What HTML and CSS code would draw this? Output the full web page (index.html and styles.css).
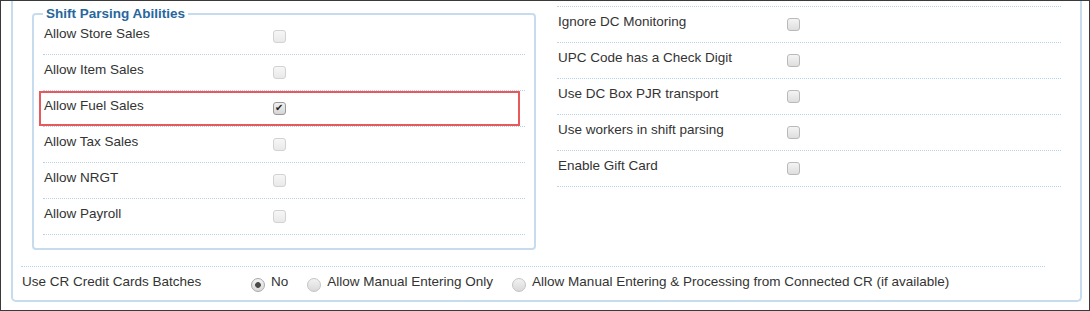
FILE: index.html
```html
<!DOCTYPE html>
<html lang="en">
<head>
    <meta charset="UTF-8">
    <meta name="viewport" content="width=device-width, initial-scale=1.0">
    <title>Store Settings</title>
    <link rel="stylesheet" href="styles.css">
</head>
<body>
    <div class="frame">
        <div class="panel">
            <div class="top">
                <fieldset class="group">
                    <legend>Shift Parsing Abilities</legend>
                    <div class="row">
                        <label for="store-sales">Allow Store Sales</label>
                        <input id="store-sales" type="checkbox" disabled>
                    </div>
                    <div class="row">
                        <label for="item-sales">Allow Item Sales</label>
                        <input id="item-sales" type="checkbox" disabled>
                    </div>
                    <div class="row highlight">
                        <label for="fuel-sales">Allow Fuel Sales</label>
                        <input id="fuel-sales" type="checkbox" checked>
                    </div>
                    <div class="row">
                        <label for="tax-sales">Allow Tax Sales</label>
                        <input id="tax-sales" type="checkbox" disabled>
                    </div>
                    <div class="row">
                        <label for="nrgt">Allow NRGT</label>
                        <input id="nrgt" type="checkbox" disabled>
                    </div>
                    <div class="row">
                        <label for="payroll">Allow Payroll</label>
                        <input id="payroll" type="checkbox" disabled>
                    </div>
                </fieldset>
                <div class="side">
                    <div class="row">
                        <label for="dc-monitoring">Ignore DC Monitoring</label>
                        <input id="dc-monitoring" type="checkbox">
                    </div>
                    <div class="row">
                        <label for="upc-digit">UPC Code has a Check Digit</label>
                        <input id="upc-digit" type="checkbox">
                    </div>
                    <div class="row">
                        <label for="pjr">Use DC Box PJR transport</label>
                        <input id="pjr" type="checkbox">
                    </div>
                    <div class="row">
                        <label for="workers">Use workers in shift parsing</label>
                        <input id="workers" type="checkbox">
                    </div>
                    <div class="row">
                        <label for="gift-card">Enable Gift Card</label>
                        <input id="gift-card" type="checkbox">
                    </div>
                </div>
            </div>
            <div class="batches">
                <label>Use CR Credit Cards Batches</label>
                <div class="choices">
                    <input id="cc-no" name="cc-batches" type="radio" value="no" checked>
                    <span class="choice">No</span>
                    <input id="cc-manual" name="cc-batches" type="radio" value="manual">
                    <span class="choice">Allow Manual Entering Only</span>
                    <input id="cc-connected" name="cc-batches" type="radio" value="connected">
                    <span class="choice">Allow Manual Entering &amp; Processing from Connected CR (if available)</span>
                </div>
            </div>
        </div>
    </div>
</body>
</html>
```

FILE: styles.css
```css
body {
    margin: 0;
    font-family: "Liberation Sans", Arial, sans-serif;
    font-size: 13.5px;
    color: #333;
    background-color: #fff;
}

.frame {
    width: 1090px;
    height: 311px;
    box-sizing: border-box;
    border: 1px solid #3a3a3a;
    padding: 0 7px 7px 10px;
}

.panel {
    border: 2px solid #c6dcee;
    border-top: none;
    border-radius: 0 0 5px 5px;
}

.top {
    display: flex;
    align-items: flex-start;
}

.group {
    width: 504px;
    box-sizing: border-box;
    margin: 5px 0 0 19px;
    padding: 0 9px 13px 9px;
    border: 2px solid #c6dcee;
    border-radius: 4px;
    min-width: 0;
}

.group legend {
    margin-left: 0;
    padding: 0 3px;
    font-weight: bold;
    line-height: 16px;
    color: #27679d;
}

.group .row:first-of-type {
    margin-top: -3px;
}

.side {
    width: 504px;
    margin: 5px 0 0 21px;
    border-top: 1px dotted #b8d2ea;
}

.row {
    position: relative;
    display: flex;
    align-items: flex-start;
    height: 29px;
    padding-top: 6px;
    line-height: 18px;
    border-bottom: 1px dotted #b8d2ea;
}

.row label {
    width: 229px;
    padding-left: 1px;
}

.highlight::after {
    content: "";
    position: absolute;
    left: -4px;
    top: 0;
    width: 481px;
    height: 35px;
    box-sizing: border-box;
    border: 2px solid #e9585b;
    pointer-events: none;
}

input[type="checkbox"] {
    appearance: none;
    -webkit-appearance: none;
    position: relative;
    width: 13px;
    height: 13px;
    margin: 5px 0 0 0;
    box-sizing: border-box;
    border: 1px solid #b9b9b9;
    border-radius: 3px;
    background: linear-gradient(#f4f4f4, #dedede);
}

input[type="checkbox"]:disabled {
    border-color: #d2d2d2;
    background: linear-gradient(#f6f6f6, #e9e9e9);
}

input[type="checkbox"]:checked {
    border-color: #9a9a9a;
    background: linear-gradient(#f0f0f0, #d6d6d6);
}

input[type="checkbox"]:checked::after {
    content: "\2714";
    position: absolute;
    left: 1px;
    top: -2px;
    font-family: "DejaVu Sans", sans-serif;
    font-size: 10px;
    line-height: 14px;
    color: #222;
}

.batches {
    display: flex;
    align-items: flex-start;
    margin: 16px 35px 0 8px;
    padding-top: 6px;
    height: 27px;
    line-height: 18px;
    border-top: 1px dotted #b8d2ea;
}

.batches label {
    width: 229px;
    padding-left: 1px;
}

.choices {
    display: flex;
    align-items: flex-start;
}

input[type="radio"] {
    appearance: none;
    -webkit-appearance: none;
    width: 14px;
    height: 14px;
    margin: 5px 6px 0 0;
    box-sizing: border-box;
    border: 1px solid #c4c4c4;
    border-radius: 50%;
    background: linear-gradient(#f2f2f2, #d9d9d9);
}

input[type="radio"]:checked {
    border-color: #a8a8a8;
    background: radial-gradient(circle, #4a4a4a 0 2.5px, transparent 3.2px), linear-gradient(#f2f2f2, #d9d9d9);
}

.choice {
    margin-right: 19px;
}
```
